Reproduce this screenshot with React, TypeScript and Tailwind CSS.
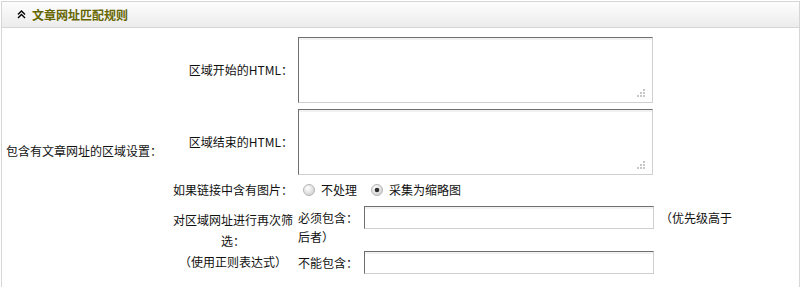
import React from 'react'

const font = { fontFamily: '"SimSun", "Noto Sans CJK SC", "Liberation Sans", sans-serif' }

function Grip() {
  return (
    <svg className="pointer-events-none absolute bottom-[6px] right-[8px]" width="9" height="9" viewBox="0 0 9 9">
      <rect x="7" y="1" width="2" height="2" fill="#c8c8c8" />
      <rect x="4" y="4" width="2" height="2" fill="#c8c8c8" />
      <rect x="7" y="4" width="2" height="2" fill="#c8c8c8" />
      <rect x="1" y="7" width="2" height="2" fill="#c8c8c8" />
      <rect x="4" y="7" width="2" height="2" fill="#c8c8c8" />
      <rect x="7" y="7" width="2" height="2" fill="#c8c8c8" />
    </svg>
  )
}

function Area() {
  return (
    <div className="relative h-[66px] w-[355px]">
      <textarea className="block h-full w-full resize-none border border-b-[#cfcfcf] border-l-[#6f6f6f] border-r-[#cfcfcf] border-t-[#6f6f6f] bg-white shadow-[inset_0_2px_0_#f2f2f2] outline-none" />
      <Grip />
    </div>
  )
}

function Field() {
  return (
    <input className="block h-[23px] w-[290px] border border-b-[#cfcfcf] border-l-[#6f6f6f] border-r-[#cfcfcf] border-t-[#6f6f6f] bg-white shadow-[inset_0_2px_0_#f2f2f2] outline-none" />
  )
}

function Radio({ on }: { on?: boolean }) {
  return (
    <svg width="12" height="12" viewBox="0 0 12 12">
      <defs>
        <radialGradient id={on ? 'ron' : 'roff'} cx="40%" cy="35%" r="70%">
          <stop offset="0%" stopColor="#ffffff" />
          <stop offset="100%" stopColor="#cfcfcf" />
        </radialGradient>
      </defs>
      <circle cx="6" cy="6" r="5.5" fill={`url(#${on ? 'ron' : 'roff'})`} stroke="#b5b5b5" />
      {on && <circle cx="6" cy="6" r="2.3" fill="#2e2e2e" />}
    </svg>
  )
}

export default function App() {
  return (
    <div className="h-[287px] w-[802px] bg-white pl-[1px] pt-[1px] text-[12px] text-[#111]" style={font}>
      <div className="w-[799px] border border-[#d6d6d6]">
        <div className="flex h-[26px] items-center border-b border-[#d6d6d6] bg-gradient-to-b from-[#fdfdfd] to-[#ececec] pl-[15px]">
          <svg width="9" height="9" viewBox="0 0 9 9" className="mr-[6px]">
            <path d="M1 4.5 L4.5 1 L8 4.5 M1 8 L4.5 4.5 L8 8" fill="none" stroke="#000" strokeWidth="1.4" />
          </svg>
          <span className="font-bold text-[#666600]">文章网址匹配规则</span>
        </div>

        <div className="flex pb-[13px]">
          <div className="flex w-[169px] items-center pl-[4px]">包含有文章网址的区域设置：</div>

          <div className="flex flex-col">
            <div className="flex items-center pt-[9px]">
              <div className="w-[124px] pr-[2px] text-right">区域开始的HTML：</div>
              <div className="pl-[3px]"><Area /></div>
            </div>
            <div className="mt-[6px] flex items-center">
              <div className="w-[124px] pr-[2px] text-right">区域结束的HTML：</div>
              <div className="pl-[3px]"><Area /></div>
            </div>

            <div className="mt-[4px] flex h-[22px] items-center">
              <div className="w-[124px] pr-[2px] text-right">如果链接中含有图片：</div>
              <div className="flex items-center pl-[8px]">
                <Radio />
                <span className="ml-[6px]">不处理</span>
                <span className="ml-[14px]"><Radio on /></span>
                <span className="ml-[6px]">采集为缩略图</span>
              </div>
            </div>

            <div className="mt-[5px] flex">
              <div className="flex w-[124px] items-center justify-center text-center leading-[21px]">
                <div>
                  对区域网址进行再次筛<br />选：<br />（使用正则表达式）
                </div>
              </div>
              <div className="flex flex-col pl-[3px]">
                <div className="flex items-center">
                  <span className="w-[66px]">必须包含：</span>
                  <Field />
                  <span className="ml-[6px]">（优先级高于</span>
                </div>
                <div className="h-[16px] leading-[16px]">后者）</div>
                <div className="mt-[6px] flex items-center">
                  <span className="w-[66px]">不能包含：</span>
                  <Field />
                </div>
              </div>
            </div>
          </div>
        </div>
      </div>
    </div>
  )
}
